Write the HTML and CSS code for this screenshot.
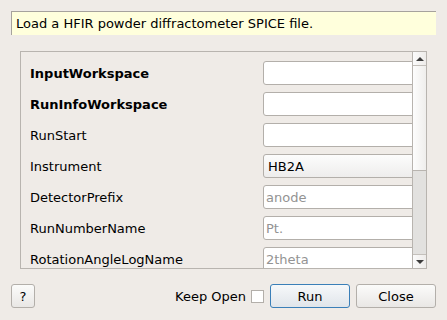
FILE: index.html
```html
<!DOCTYPE html>
<html>
<head>
<meta charset="utf-8">
<link rel="stylesheet" href="styles.css">
</head>
<body>
<div class="dialog">
  <div class="desc">Load a HFIR powder diffractometer SPICE file.</div>
  <div class="frame">
    <div class="content">
      <div class="row"><div class="label bold">InputWorkspace</div><div class="field"></div></div>
      <div class="row"><div class="label bold">RunInfoWorkspace</div><div class="field"></div></div>
      <div class="row"><div class="label">RunStart</div><div class="field"></div></div>
      <div class="row"><div class="label">Instrument</div><div class="field combo">HB2A</div></div>
      <div class="row"><div class="label">DetectorPrefix</div><div class="field ph">anode</div></div>
      <div class="row"><div class="label">RunNumberName</div><div class="field ph">Pt.</div></div>
      <div class="row"><div class="label">RotationAngleLogName</div><div class="field ph">2theta</div></div>
    </div>
    <div class="scrollbar">
      <div class="sb-btn"><span class="tri up"></span></div>
      <div class="sb-handle"></div>
      <div class="sb-trough"></div>
      <div class="sb-btn bottom"><span class="tri down"></span></div>
    </div>
  </div>
  <div class="footer">
    <div class="btn help">?</div>
    <div class="spacer"></div>
    <div class="keep">Keep Open</div>
    <div class="check"></div>
    <div class="btn wide run">Run</div>
    <div class="btn wide">Close</div>
  </div>
</div>
</body>
</html>
```
FILE: styles.css
```css
html, body {
  margin: 0;
  padding: 0;
  background: #efebe7;
}
body {
  font-family: "DejaVu Sans", sans-serif;
  font-size: 13px;
  color: #000;
}
.dialog {
  width: 447px;
  height: 320px;
  box-sizing: border-box;
  padding: 11px 11px 12px 11px;
  display: flex;
  flex-direction: column;
}
.desc {
  height: 24px;
  box-sizing: border-box;
  background: #ffffdc;
  border-top: 1px solid #a6a29d;
  border-left: 1px solid #a6a29d;
  padding-left: 4px;
  display: flex;
  align-items: center;
  white-space: nowrap;
}
.frame {
  margin: 16px 9px 0 9px;
  height: 218px;
  box-sizing: border-box;
  border: 1px solid #b8b4af;
  display: flex;
  overflow: hidden;
}
.content {
  flex: 1;
  overflow: hidden;
  padding: 9px 0 0 9px;
  display: flex;
  flex-direction: column;
  gap: 7px;
}
.row {
  display: flex;
  align-items: center;
  height: 24px;
  flex: none;
}
.label {
  width: 233px;
  flex: none;
  white-space: nowrap;
}
.bold { font-weight: bold; }
.field {
  flex: none;
  width: 170px;
  height: 24px;
  box-sizing: border-box;
  background: #fff;
  border: 1px solid #b3afaa;
  border-radius: 3px;
  padding-left: 2px;
  display: flex;
  align-items: center;
  white-space: nowrap;
}
.field.combo {
  background: linear-gradient(#fcfcfc, #eeedec);
  padding-left: 4px;
}
.field.ph { color: #939393; }
.scrollbar {
  width: 14px;
  flex: none;
  border-left: 1px solid #b8b4af;
  display: flex;
  flex-direction: column;
  box-sizing: border-box;
}
.sb-btn {
  height: 14px;
  flex: none;
  box-sizing: border-box;
  border-bottom: 1px solid #c4c0bb;
  background: linear-gradient(90deg, #fbfbfb, #eeecea);
  display: flex;
  align-items: center;
  justify-content: center;
}
.sb-btn.bottom {
  border-bottom: none;
  border-top: 1px solid #c4c0bb;
}
.sb-handle {
  height: 105px;
  flex: none;
  box-sizing: border-box;
  border-bottom: 1px solid #b8b4af;
  background: linear-gradient(90deg, #fdfdfd, #efeeec);
}
.sb-trough {
  flex: 1;
  background: #e2e1df;
}
.tri {
  width: 0;
  height: 0;
  border-left: 4px solid transparent;
  border-right: 4px solid transparent;
}
.tri.up { border-bottom: 4px solid #3c3c3c; }
.tri.down { border-top: 4px solid #3c3c3c; }
.footer {
  margin-top: 15px;
  height: 24px;
  display: flex;
  align-items: center;
}
.spacer { flex: 1; }
.btn {
  height: 24px;
  box-sizing: border-box;
  border: 1px solid #b3afaa;
  border-radius: 3px;
  background: linear-gradient(#fbfbfa, #e9e7e5);
  display: flex;
  align-items: center;
  justify-content: center;
}
.btn.help { width: 24px; }
.btn.wide { width: 80px; margin-left: 6px; }
.btn.run {
  border-color: #3a7fb8;
  background: linear-gradient(#f6f8fa, #e0e5ea);
}
.keep { margin-right: 5px; }
.check {
  width: 13px;
  height: 13px;
  box-sizing: border-box;
  border: 1px solid #b3afaa;
  background: #fff;
}
```
